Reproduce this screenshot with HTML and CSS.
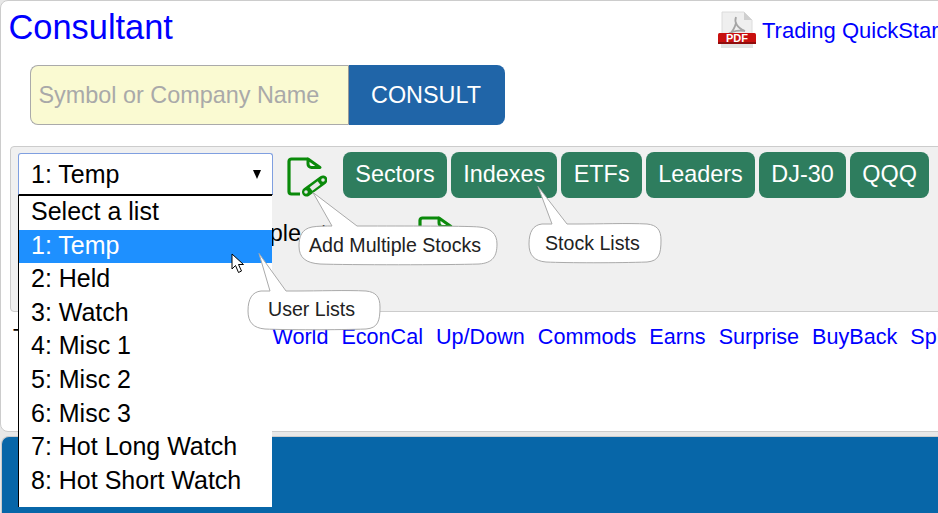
FILE: index.html
```html
<!DOCTYPE html>
<html lang="en">
<head>
<meta charset="utf-8">
<title>Consultant</title>
<link rel="stylesheet" href="styles.css">
</head>
<body>
<main class="card">
  <header class="top">
    <a class="title" href="#">Consultant</a>
    <a class="guide" href="#">
      <svg class="pdf" viewBox="0 0 38 38" width="38" height="38" aria-hidden="true">
        <path d="M4 1H26L34 9V36H4Z" fill="#efefef" stroke="#dcdcdc"/>
        <path d="M26 1V9H34Z" fill="#cfcfcf"/>
        <path d="M18 6C16 11 19 17 27 20C21 19 14 20 9 24M18 12C17 16 14 21 11 24" fill="none" stroke="#a5a5a5" stroke-width="1.800"/>
        <rect y="22" width="38" height="11" rx="1.500" fill="#c8100f"/>
        <rect y="31" width="38" height="2" fill="#900c0c"/>
        <rect x="3" y="33" width="32" height="4" fill="#e2e2e2"/>
        <text x="19" y="31" class="pdf-text" text-anchor="middle">PDF</text>
      </svg>
      <span class="guide-label">Trading QuickStart</span>
    </a>
  </header>

  <form class="consult">
    <input class="symbol" type="text" placeholder="Symbol or Company Name">
    <button class="go" type="button">CONSULT</button>
  </form>

  <section class="panel">
    <div class="row-main">
      <div class="select-box"><span>1: Temp</span><i class="caret"></i></div>
      <svg class="doc" viewBox="0 0 40 42" width="40" height="42" aria-hidden="true">
        <path d="M21 3H4.500A2.500 2.500 0 0 0 2 5.500V35.500A2.500 2.500 0 0 0 4.500 38H13" fill="none" stroke="#0a8a0a" stroke-width="3.200"/>
        <path d="M21 3L33 11.500H24.500A3.500 3.500 0 0 1 21 8Z" fill="#f6f6f6" stroke="#0a8a0a" stroke-width="3" stroke-linejoin="round"/>
        <path d="M19.500 36L36 24" stroke="#0a8a0a" stroke-width="9" stroke-linecap="round"/>
        <path d="M24 33L32 27" stroke="#e8e8e8" stroke-width="4.500"/>
        <circle cx="19" cy="36" r="1.800" fill="#e8e8e8"/>
        <circle cx="36" cy="24" r="1.800" fill="#e8e8e8"/>
      </svg>
      <nav class="lists">
        <a href="#">Sectors</a>
        <a href="#">Indexes</a>
        <a href="#">ETFs</a>
        <a href="#">Leaders</a>
        <a href="#">DJ-30</a>
        <a href="#">QQQ</a>
      </nav>
    </div>
    <div class="row-second">
      <span class="multi">Multiple at once</span>
      <svg class="doc-two" viewBox="0 0 40 42" width="40" height="42" aria-hidden="true">
        <path d="M21 3H4.500A2.500 2.500 0 0 0 2 5.500V35.500A2.500 2.500 0 0 0 4.500 38H13" fill="none" stroke="#0a8a0a" stroke-width="3.200"/>
        <path d="M21 3L33 11.500H24.500A3.500 3.500 0 0 1 21 8Z" fill="#f6f6f6" stroke="#0a8a0a" stroke-width="3" stroke-linejoin="round"/>
      </svg>
    </div>
  </section>

  <nav class="links">
    <span class="clip">T</span>
    <a href="#">World</a>
    <a href="#">EconCal</a>
    <a href="#">Up/Down</a>
    <a href="#">Commods</a>
    <a href="#">Earns</a>
    <a href="#">Surprise</a>
    <a href="#">BuyBack</a>
    <a href="#">Splits</a>
  </nav>
</main>
<footer class="bar"></footer>

<ul class="dropdown">
  <li>Select a list</li>
  <li class="on">1: Temp</li>
  <li>2: Held</li>
  <li>3: Watch</li>
  <li>4: Misc 1</li>
  <li>5: Misc 2</li>
  <li>6: Misc 3</li>
  <li>7: Hot Long Watch</li>
  <li>8: Hot Short Watch</li>
</ul>

<svg class="pointer" viewBox="0 0 15 21" width="15" height="21" aria-hidden="true">
  <path d="M1 1V16L4.500 12.500L7.500 19.500L10.500 18L7.500 11.500H12.500Z" fill="#fff" stroke="#000" stroke-width="1"/>
</svg>

<div class="tip tip-add">
  <svg viewBox="0 0 200 76" width="200" height="76" aria-hidden="true">
    <path d="M15 .5L59 34H70C120 34 170 34 181 35C193 36 199 42 199 52C199 64 195 71 181 72C150 73 50 73 22 72C8 71 1 66 1 54C1 44 4 37 14 35C20 34 28 34 34 34Z" fill="#fff" stroke="#aaa"/>
  </svg>
  <span>Add Multiple Stocks</span>
</div>
<div class="tip tip-stock">
  <svg viewBox="0 0 136 78" width="136" height="78" aria-hidden="true">
    <path d="M10 .5L39 38H50C70 38 100 37 119 38C129 39 133 44 133 54C133 68 131 75 119 76C90 77 40 77 18 76C6 75 1 69 1 58C1 46 5 39 14 38H24Z" fill="#fff" stroke="#aaa"/>
  </svg>
  <span>Stock Lists</span>
</div>
<div class="tip tip-user">
  <svg viewBox="0 0 136 78" width="136" height="78" aria-hidden="true">
    <path d="M12 .5L39 38H50C70 38 100 37 119 38C129 39 133 44 133 54C133 68 131 75 119 76C90 77 40 77 18 76C6 75 1 69 1 58C1 46 5 39 14 38H23Z" fill="#fff" stroke="#aaa"/>
  </svg>
  <span>User Lists</span>
</div>
</body>
</html>
```

FILE: styles.css
```css
* { box-sizing: border-box; }

html, body {
  margin: 0;
  height: 513px;
  overflow: hidden;
}

body {
  position: relative;
  background: #e8e8e8;
  font-family: "Liberation Sans", Arial, sans-serif;
  color: #000;
}

a { color: #0000ff; text-decoration: none; }

.card {
  height: 432px;
  width: 960px;
  background: #fff;
  border: 1px solid #ccc;
  border-radius: 8px;
  overflow: hidden;
}

.top {
  display: flex;
  justify-content: space-between;
  width: 937px;
  height: 64px;
  padding-left: 7.500px;
}

.title {
  font-size: 34.400px;
  line-height: 39px;
  padding-top: 7px;
}

.guide {
  display: flex;
  align-items: center;
  gap: 6px;
  height: 44px;
  margin-top: 7px;
  font-size: 22px;
  white-space: nowrap;
  width: 220px;
  overflow: hidden;
  flex: none;
}

.guide-label { padding-top: 2px; }

.pdf { flex: none; }
.pdf-text { font: bold 11px "Liberation Sans", Arial, sans-serif; fill: #fff; }

.consult {
  display: flex;
  height: 60px;
  margin-left: 29px;
}

.symbol {
  width: 319px;
  height: 60px;
  padding: 0 7.500px;
  background: #fafad2;
  border: 1px solid #aaa;
  border-right-color: #999;
  border-radius: 8px 0 0 8px;
  font: 23.400px "Liberation Sans", Arial, sans-serif;
  outline: none;
}

.symbol::placeholder { color: #a9a9a9; opacity: 1; }

.go {
  width: 156px;
  height: 60px;
  padding: 0 8px 0 6px;
  border: 0;
  border-radius: 0 8px 8px 0;
  background: #2065a8;
  color: #fff;
  font: 23.400px "Liberation Sans", Arial, sans-serif;
}

.panel {
  width: 960px;
  height: 166px;
  margin: 21px 0 0 9px;
  padding: 5px 7px;
  background: #f0f0f0;
  border: 1px solid #ccc;
  border-radius: 4px;
}

.row-main {
  display: flex;
  align-items: flex-start;
}

.select-box {
  display: flex;
  flex: none;
  align-items: center;
  justify-content: space-between;
  width: 255px;
  height: 42px;
  margin-top: 1px;
  padding: 0 11px 0 12px;
  background: #fff;
  border: 1px solid #7f9fe0;
  border-bottom-color: #000;
  border-radius: 3px 3px 0 0;
  font-size: 25px;
}

.caret {
  width: 0;
  height: 0;
  border-left: 4.500px solid transparent;
  border-right: 4.500px solid transparent;
  border-top: 9px solid #000;
}

.doc {
  flex: none;
  margin: 4px 0 0 14px;
}

.lists {
  display: flex;
  gap: 4px;
  margin-left: 16px;
}

.lists a {
  display: block;
  height: 46px;
  padding: 0 12.300px;
  background: #2e7d5e;
  border-radius: 8px;
  color: #fff;
  font-size: 23.400px;
  line-height: 45px;
}

.row-second {
  display: flex;
  align-items: flex-start;
  height: 100px;
  margin-top: 17px;
}

.multi {
  flex: none;
  width: 197.600px;
  margin: 4px 0 0 202.400px;
  font-size: 23.400px;
  line-height: 28px;
  white-space: nowrap;
}

.doc-two {
  flex: none;
}

.links {
  display: flex;
  gap: 13px;
  margin: 12px 0 0 12px;
  font-size: 21.600px;
  line-height: 26px;
  white-space: nowrap;
}

.clip { color: #000; margin-right: 233.200px; }

.bar {
  position: absolute;
  left: 1px;
  top: 436px;
  width: 960px;
  height: 77px;
  background: #0766a8;
  border: 1px solid #ccc;
  border-width: 1px 0 0 1px;
  border-radius: 8px 0 0 0;
}

.dropdown {
  position: absolute;
  left: 18px;
  top: 195px;
  width: 254px;
  height: 312px;
  margin: 0;
  padding: 0;
  list-style: none;
  background: #fff;
  border-left: 1.500px solid #000;
  border-top: 1px solid #000;
  font-size: 25px;
}

.dropdown li {
  height: 33.600px;
  padding-left: 12px;
  line-height: 31px;
  white-space: nowrap;
}

.dropdown .on {
  background: #1e90ff;
  color: #fff;
}

.pointer {
  position: absolute;
  left: 231px;
  top: 253px;
}

.tip {
  position: absolute;
  font-size: 19.600px;
  color: #222;
}

.tip svg { display: block; }

.tip span {
  position: absolute;
  white-space: nowrap;
}

.tip-add { left: 298px; top: 192px; }
.tip-add span { left: 11px; bottom: 11px; }

.tip-stock { left: 528px; top: 186px; }
.tip-stock span { left: 17px; bottom: 9px; }

.tip-user { left: 247px; top: 253px; }
.tip-user span { left: 21px; bottom: 10px; }
```
